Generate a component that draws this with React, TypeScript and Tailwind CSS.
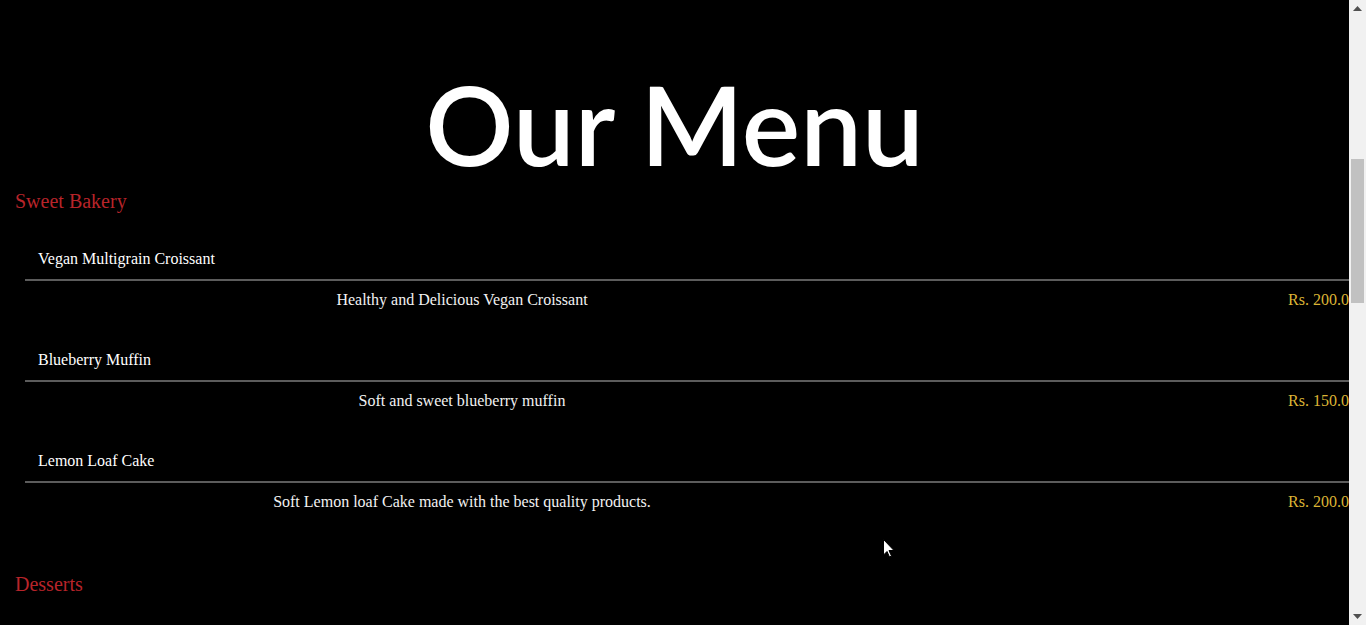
import type { ReactNode } from 'react';

type MenuItem = {
  name: string;
  description: string;
  price: string;
};

const bakery: MenuItem[] = [
  { name: 'Vegan Multigrain Croissant', description: 'Healthy and Delicious Vegan Croissant', price: 'Rs. 200.00' },
  { name: 'Blueberry Muffin', description: 'Soft and sweet blueberry muffin', price: 'Rs. 150.00' },
  { name: 'Lemon Loaf Cake', description: 'Soft Lemon loaf Cake made with the best quality products.', price: 'Rs. 200.00' }
];

const serif = "font-['Liberation_Serif','Times_New_Roman',serif]";

function SectionTitle({ children }: { children: ReactNode }) {
  return <h2 className={`${serif} pl-[15px] text-[20px] leading-[23px] text-[#b8242a]`}>{children}</h2>;
}

function MenuRow({ item }: { item: MenuItem }) {
  return (
    <div className={`${serif} ml-[25px] w-[1500px] text-[16px] leading-[18px]`}>
      <div className="border-b-2 border-[#5c5c5c] pb-[11px] pl-[13px] text-white">{item.name}</div>
      <div className="grid grid-cols-[874px_389px_auto] pt-[10px]">
        <div className="text-center text-[#f2f2f2]">{item.description}</div>
        <div />
        <div className="text-[#dcb435]">{item.price}</div>
      </div>
    </div>
  );
}

function Scrollbar() {
  return (
    <div className="flex h-full w-[17px] shrink-0 flex-col bg-[#f1f1f1]">
      <div className="flex h-[17px] items-center justify-center">
        <svg width="9" height="5" viewBox="0 0 9 5">
          <path d="M0 5 L4.5 0 L9 5 Z" fill="#505050" />
        </svg>
      </div>
      <div className="flex flex-1 flex-col px-[2px]">
        <div className="h-[142px]" />
        <div className="h-[144px] bg-[#c1c1c1]" />
      </div>
      <div className="flex h-[17px] items-center justify-center">
        <svg width="9" height="5" viewBox="0 0 9 5">
          <path d="M0 0 L4.5 5 L9 0 Z" fill="#505050" />
        </svg>
      </div>
    </div>
  );
}

export default function App() {
  return (
    <div className="relative flex h-[625px] w-full overflow-hidden bg-black">
      <main className="min-w-0 flex-1 overflow-hidden">
        <h1 className="flex h-[190px] items-end justify-center font-['Comic_Sans_MS',Lato,sans-serif] text-[110px] font-semibold leading-[134px] text-white">
          Our Menu
        </h1>
        <SectionTitle>Sweet Bakery</SectionTitle>
        <div className="mt-[37px] flex flex-col gap-[42px]">
          {bakery.map((item) => (
            <MenuRow key={item.name} item={item} />
          ))}
        </div>
        <div className="mt-[62px]">
          <SectionTitle>Desserts</SectionTitle>
        </div>
      </main>
      <Scrollbar />
      <svg className="absolute left-[883px] top-[539px]" width="12" height="19" viewBox="0 0 12 19">
        <path d="M0.5 0.5 L0.5 16 L4 12.5 L6.5 18 L8.5 17 L6 11.5 L11 11.5 Z" fill="white" stroke="black" strokeWidth="1" />
      </svg>
    </div>
  );
}
